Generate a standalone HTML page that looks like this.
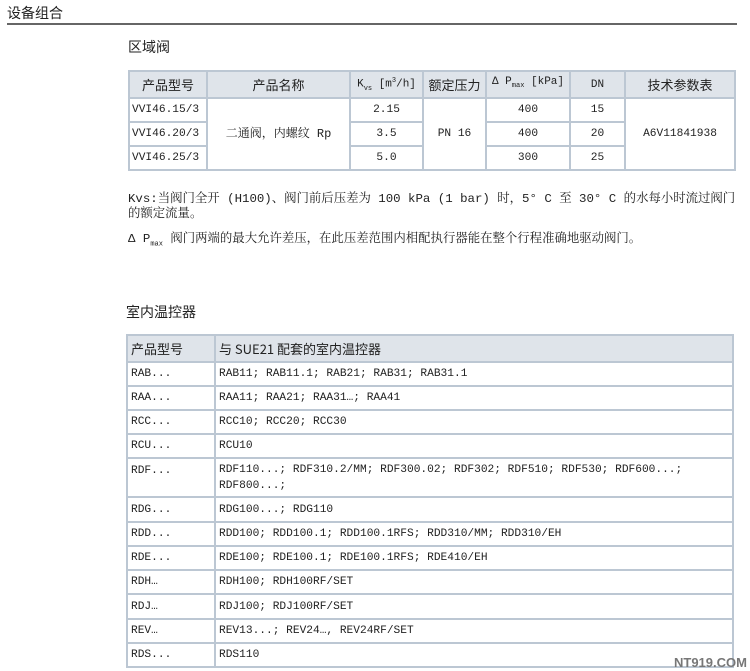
<!DOCTYPE html>
<html><head><meta charset="utf-8"><style>
body{margin:0;width:750px;height:671px;background:#fff;position:relative;overflow:hidden;font-family:"Liberation Mono","Noto Serif CJK SC",monospace;color:#222;font-size:11.2px}
.abs{position:absolute}
table{position:absolute;border-collapse:collapse;table-layout:fixed}
td{border:2px solid #bcc7d3;padding:0 4px;height:20px;line-height:14px;white-space:nowrap;overflow:hidden}
.t1 td{text-align:center}
.t1 tr.h td,.t2 tr.h td{background:#dfe4ea;font-size:13px;font-family:"Noto Sans CJK SC",sans-serif}
.t2 td{text-align:left;padding-left:3px}
.t1 td.l{text-align:left;padding-left:2px}
.p{font-size:12.4px}
</style></head><body>
<div class="abs" style="left:7px;top:3px;font-size:14px;font-family:'Noto Sans CJK SC',sans-serif">设备组合</div>
<div class="abs" style="left:7px;top:23px;width:730px;height:2px;background:#666"></div>
<div class="abs" style="left:128px;top:37px;font-size:14px;font-family:'Noto Sans CJK SC',sans-serif">区域阀</div>
<table class="t1" style="left:128px;top:70px;width:606px">
<colgroup><col style="width:78px"><col style="width:143px"><col style="width:73px"><col style="width:63px"><col style="width:84px"><col style="width:55px"><col style="width:110px"></colgroup>
<tr class="h" style="height:27px"><td>产品型号</td><td>产品名称</td><td style="font-family:'Liberation Mono',monospace;font-size:11px">K<sub style="font-size:7px">vs</sub> [m<sup style="font-size:7px">3</sup>/h]</td><td>额定压力</td><td style="font-family:'Liberation Mono',monospace;font-size:11px">Δ P<sub style="font-size:7px">max</sub> [kPa]</td><td style="font-family:'Liberation Mono',monospace;font-size:11px">DN</td><td>技术参数表</td></tr>
<tr style="height:24px"><td class="l">VVI46.15/3</td><td rowspan="3" style="font-size:12px">二通阀，内螺纹 Rp</td><td>2.15</td><td rowspan="3">PN 16</td><td>400</td><td>15</td><td rowspan="3">A6V11841938</td></tr>
<tr style="height:24px"><td class="l">VVI46.20/3</td><td>3.5</td><td>400</td><td>20</td></tr>
<tr style="height:24px"><td class="l">VVI46.25/3</td><td>5.0</td><td>300</td><td>25</td></tr>
</table>
<div class="abs p" style="left:128px;top:192px;line-height:15px;width:620px">Kvs:当阀门全开 (H100)、阀门前后压差为 100 kPa (1 bar) 时，5° C 至 30° C 的水每小时流过阀门<br>的额定流量。</div>
<div class="abs p" style="left:128px;top:232px;line-height:14px">Δ P<sub style="font-size:7px">max</sub> 阀门两端的最大允许差压，在此压差范围内相配执行器能在整个行程准确地驱动阀门。</div>
<div class="abs" style="left:126px;top:302px;font-size:14px;font-family:'Noto Sans CJK SC',sans-serif">室内温控器</div>
<table class="t2" style="left:126px;top:334px;width:608px">
<colgroup><col style="width:88px"><col></colgroup>
<tr class="h" style="height:27px"><td>产品型号</td><td>与 SUE21 配套的室内温控器</td></tr>
<tr style="height:24px"><td>RAB...</td><td>RAB11; RAB11.1; RAB21; RAB31; RAB31.1</td></tr>
<tr style="height:24px"><td>RAA...</td><td>RAA11; RAA21; RAA31…; RAA41</td></tr>
<tr style="height:24px"><td>RCC...</td><td>RCC10; RCC20; RCC30</td></tr>
<tr style="height:24px"><td>RCU...</td><td>RCU10</td></tr>
<tr style="height:39px"><td style="vertical-align:top;padding-top:5px">RDF...</td><td style="line-height:16px">RDF110...; RDF310.2/MM; RDF300.02; RDF302; RDF510; RDF530; RDF600...;<br>RDF800...;</td></tr>
<tr style="height:25px"><td>RDG...</td><td>RDG100...; RDG110</td></tr>
<tr style="height:24px"><td>RDD...</td><td>RDD100; RDD100.1; RDD100.1RFS; RDD310/MM; RDD310/EH</td></tr>
<tr style="height:24px"><td>RDE...</td><td>RDE100; RDE100.1; RDE100.1RFS; RDE410/EH</td></tr>
<tr style="height:24px"><td>RDH…</td><td>RDH100; RDH100RF/SET</td></tr>
<tr style="height:25px"><td>RDJ…</td><td>RDJ100; RDJ100RF/SET</td></tr>
<tr style="height:24px"><td>REV…</td><td>REV13...; REV24…, REV24RF/SET</td></tr>
<tr style="height:24px"><td>RDS...</td><td>RDS110</td></tr>
</table>
<div class="abs" style="left:674px;top:655px;font-family:'Liberation Sans',sans-serif;font-size:13px;font-weight:bold;color:#777">NT919.COM</div>
</body></html>
